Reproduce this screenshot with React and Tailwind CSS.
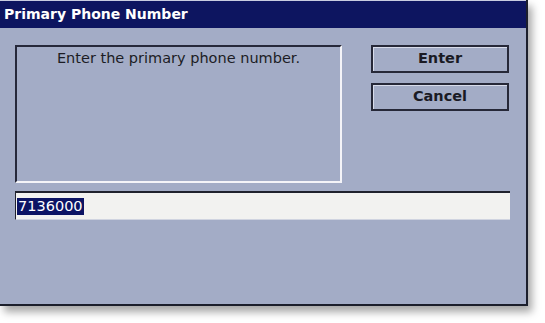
import React from "react";

const App = () => {
    return (
        <div className="w-[545px] h-[323px] bg-white overflow-hidden" style={{ fontFamily: '"DejaVu Sans", Verdana, sans-serif' }}>
            <div className="w-[528px] h-[306px] bg-[#a3acc6] border-r-2 border-b-2 border-[#1c1f2c] shadow-[4px_6px_8px_rgba(0,0,0,0.35)] flex flex-col">
                <div className="h-[28px] bg-[#0d1560] border-t border-[#c8cce0] flex items-center pl-[4px]">
                    <span className="text-white font-bold text-[14px]">Primary Phone Number</span>
                </div>
                <div className="flex flex-col pl-[15px] pt-[17px]">
                    <div className="flex">
                        <div className="w-[327px] h-[138px] border-t-2 border-l-2 border-[#26283a] border-b-2 border-r-2 border-b-[#f4f4f8] border-r-[#f4f4f8] flex justify-center pt-[1px]">
                            <span className="text-[14.5px] text-[#1c1c24]">Enter the primary phone number.</span>
                        </div>
                        <div className="flex flex-col gap-[10px] ml-[29px]">
                            <button className="w-[138px] h-[28px] border-2 border-[#262838] shadow-[inset_1px_1px_0_#d8dcea] bg-[#a3acc6] text-[14.5px] font-bold text-[#1a1a24]">
                                Enter
                            </button>
                            <button className="w-[138px] h-[28px] border-2 border-[#262838] shadow-[inset_1px_1px_0_#d8dcea] bg-[#a3acc6] text-[14.5px] font-bold text-[#1a1a24]">
                                Cancel
                            </button>
                        </div>
                    </div>
                    <div className="mt-[8px] w-[495px] h-[29px] bg-[#f2f2f0] border-t-2 border-l border-[#20222e] border-b border-b-[#d0d4e0] flex items-center pl-[1px]">
                        <span className="bg-[#0c1464] text-white text-[14.5px] leading-[17px] px-[1px]">7136000</span>
                    </div>
                </div>
            </div>
        </div>
    );
};

export default App;
